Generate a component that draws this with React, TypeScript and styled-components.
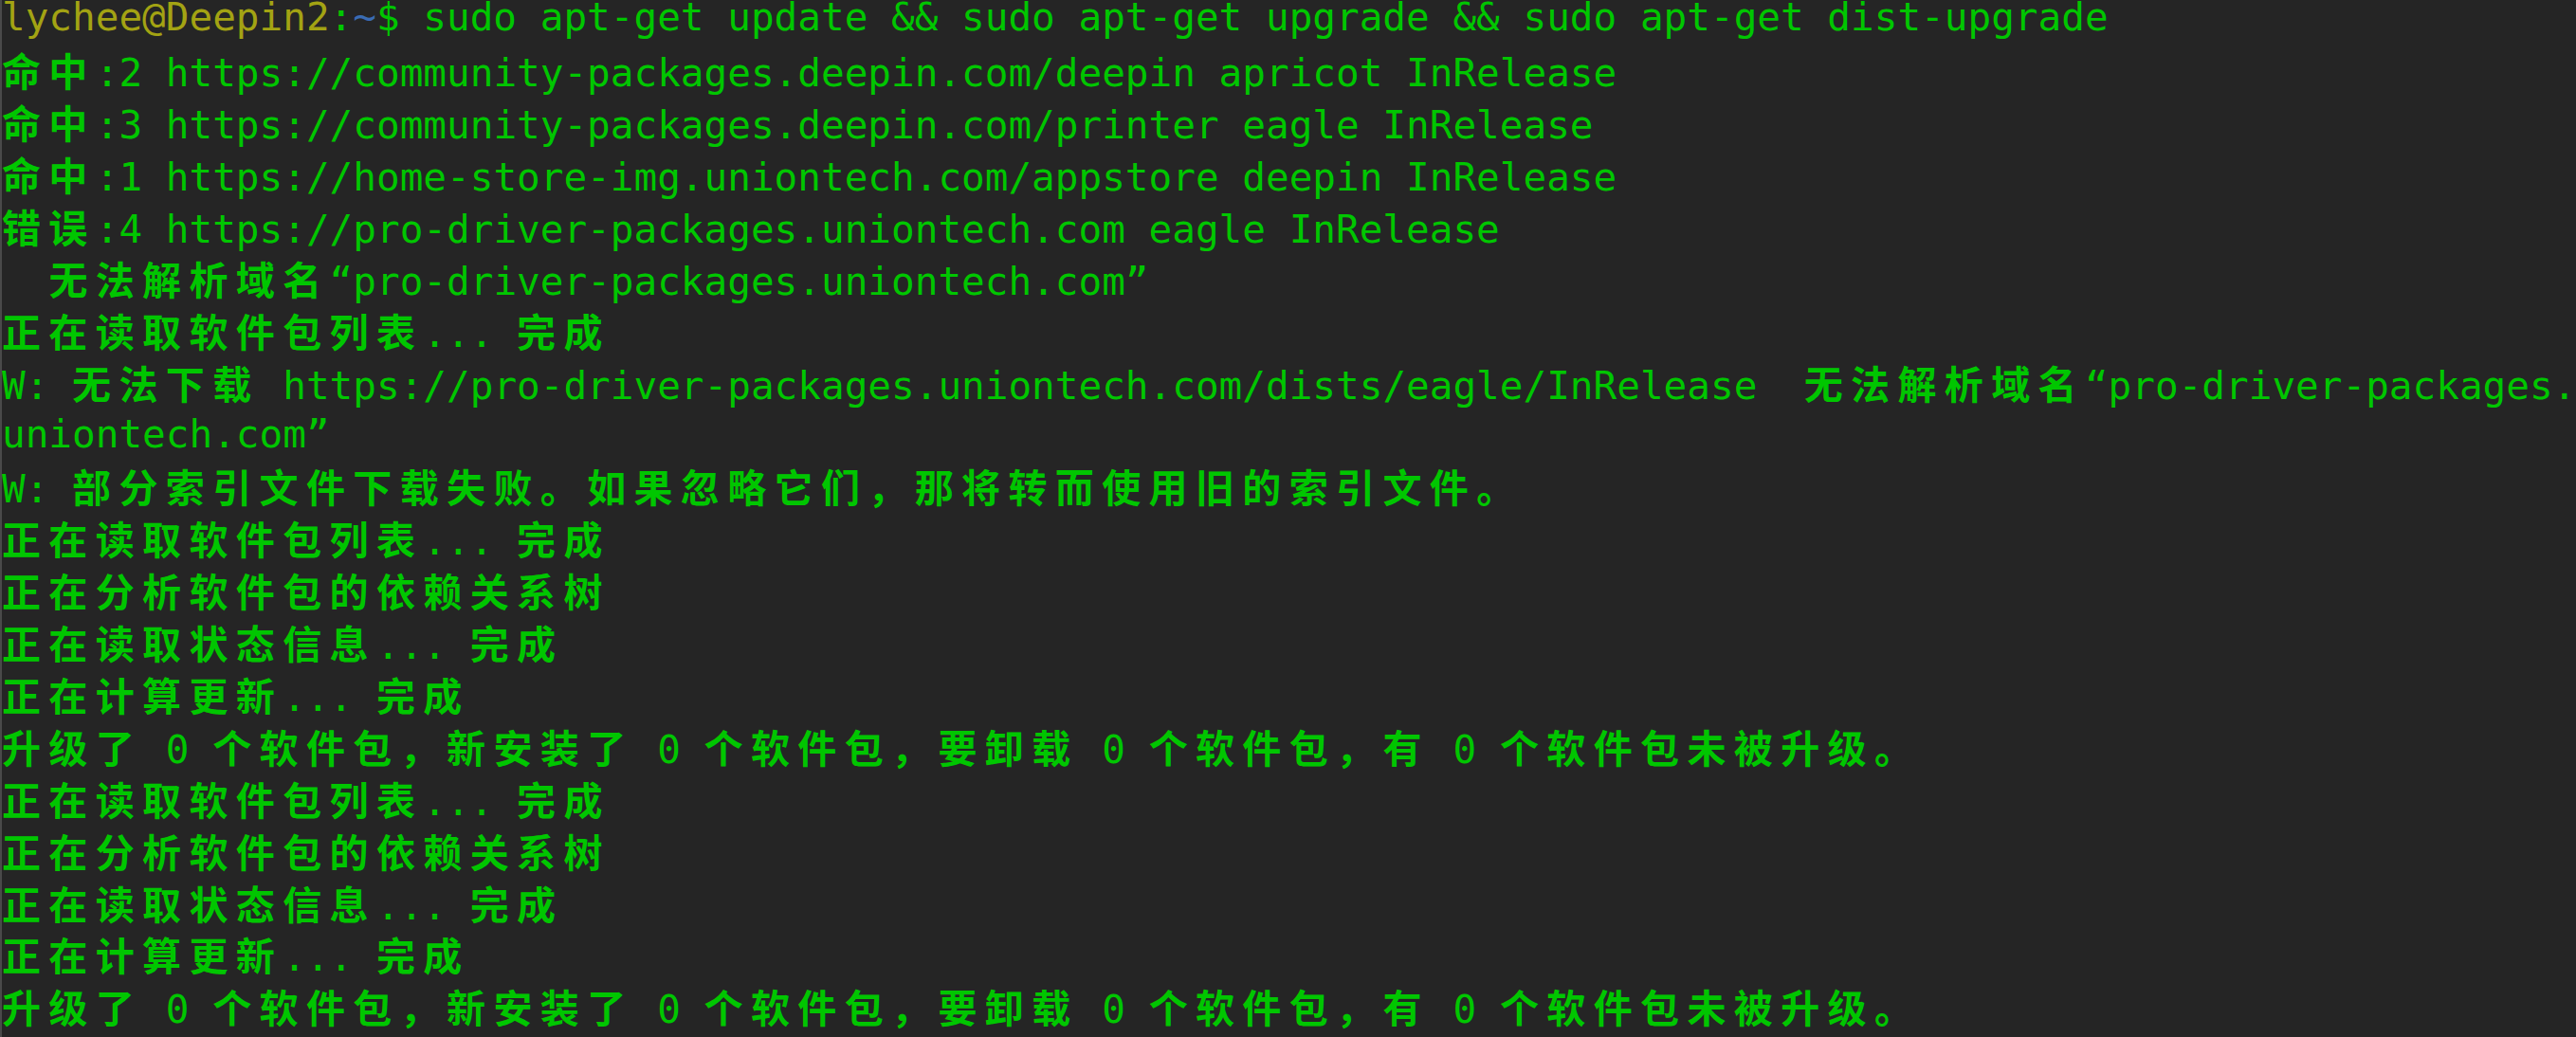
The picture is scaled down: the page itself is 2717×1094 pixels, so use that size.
import React from "react";
import styled, { createGlobalStyle } from "styled-components";

const GlobalStyle = createGlobalStyle`
  html, body {
    margin: 0;
    padding: 0;
    background: #252525;
    overflow: hidden;
  }
`;

const Terminal = styled.div`
  width: 2717px;
  height: 1094px;
  box-sizing: border-box;
  background: #252525;
  border-left: 2px solid #4a4a4a;
  overflow: hidden;
  font-family: "DejaVu Sans Mono", "Noto Sans CJK SC", monospace;
  font-size: 41px;
  color: #00c600;
`;

const Screen = styled.div`
  margin-top: -8.6px;
  display: flex;
  flex-direction: column;
`;

const Line = styled.div`
  flex: none;
  height: 54.9px;
  line-height: 54.9px;
  white-space: pre;
`;

const Wide = styled.span`
  font-family: "Noto Sans CJK SC", sans-serif;
  font-weight: 600;
  letter-spacing: 8.37px;
`;

const Tone = styled.span<{ $c: string }>`
  color: ${(p) => p.$c};
`;

const isWide = (ch: string) => {
  const c = ch.codePointAt(0) || 0;
  return (
    (c >= 0x4e00 && c <= 0x9fff) ||
    (c >= 0x3000 && c <= 0x303f) ||
    (c >= 0xff00 && c <= 0xffef)
  );
};

const Cells: React.FC<{ text: string }> = ({ text }) => {
  const runs: { wide: boolean; s: string }[] = [];
  for (const ch of Array.from(text)) {
    const w = isWide(ch);
    const last = runs[runs.length - 1];
    if (last && last.wide === w) last.s += ch;
    else runs.push({ wide: w, s: ch });
  }
  return (
    <>
      {runs.map((r, i) => (r.wide ? <Wide key={i}>{r.s}</Wide> : <React.Fragment key={i}>{r.s}</React.Fragment>))}
    </>
  );
};

const block = [
  "正在读取软件包列表... 完成",
  "正在分析软件包的依赖关系树",
  "正在读取状态信息... 完成",
  "正在计算更新... 完成",
  "升级了 0 个软件包，新安装了 0 个软件包，要卸载 0 个软件包，有 0 个软件包未被升级。",
];

const lines = [
  "命中:2 https://community-packages.deepin.com/deepin apricot InRelease",
  "命中:3 https://community-packages.deepin.com/printer eagle InRelease",
  "命中:1 https://home-store-img.uniontech.com/appstore deepin InRelease",
  "错误:4 https://pro-driver-packages.uniontech.com eagle InRelease",
  "  无法解析域名“pro-driver-packages.uniontech.com”",
  "正在读取软件包列表... 完成",
  "W: 无法下载 https://pro-driver-packages.uniontech.com/dists/eagle/InRelease  无法解析域名“pro-driver-packages.",
  "uniontech.com”",
  "W: 部分索引文件下载失败。如果忽略它们，那将转而使用旧的索引文件。",
  ...block,
  ...block,
];

export default function App() {
  return (
    <>
      <GlobalStyle />
      <Terminal>
        <Screen>
          <Line>
            <Tone $c="#a3a313">lychee@Deepin2</Tone>
            <Tone $c="#00c600">:</Tone>
            <Tone $c="#3a6cb4">~</Tone>
            <Tone $c="#00c600">$ sudo apt-get update &amp;&amp; sudo apt-get upgrade &amp;&amp; sudo apt-get dist-upgrade</Tone>
          </Line>
          {lines.map((l, i) => (
            <Line key={i}>
              <Cells text={l} />
            </Line>
          ))}
        </Screen>
      </Terminal>
    </>
  );
}
